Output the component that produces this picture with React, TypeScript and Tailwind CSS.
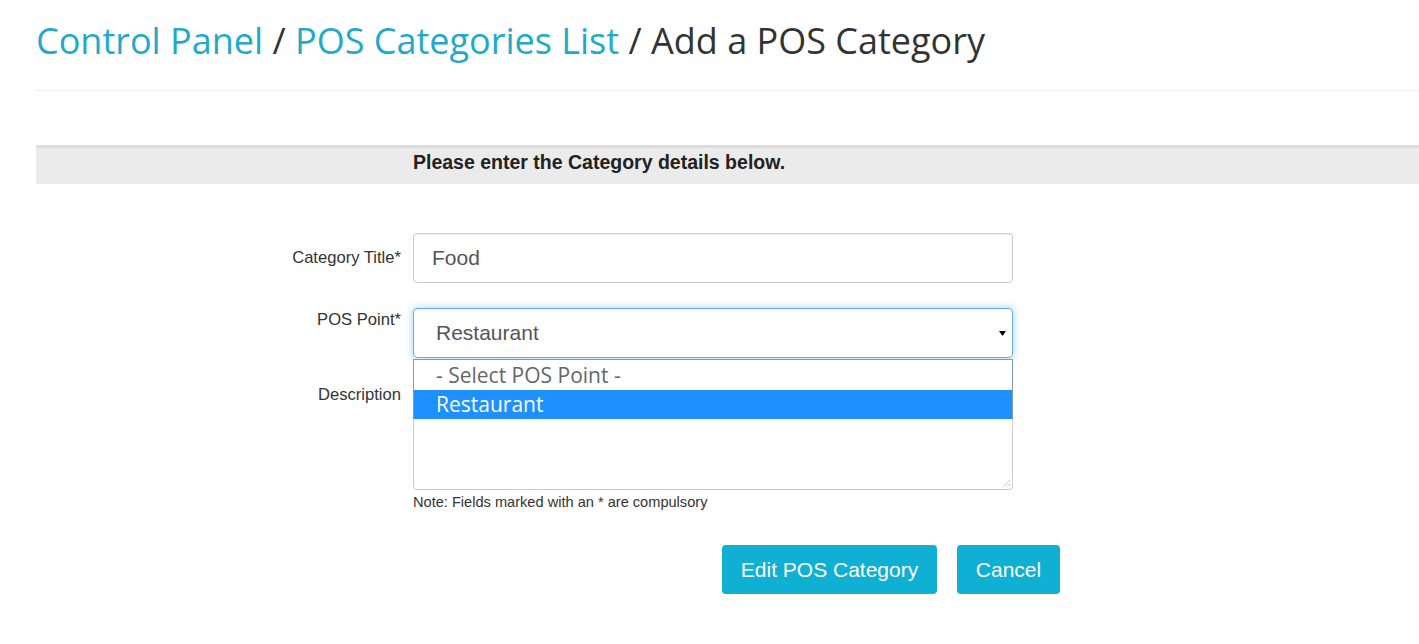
import React from "react";

export default function App() {
  return (
    <div className="w-[1419px] min-h-[644px] bg-white pl-[36px] overflow-hidden" style={{ fontFamily: '"Liberation Sans", Arial, sans-serif' }}>
      <h1
        className="mt-[21px] text-[36px] leading-[40px] text-[#333] whitespace-nowrap"
        style={{ fontFamily: '"Open Sans", sans-serif' }}
      >
        <span className="text-[#1fa9cb]">Control Panel</span> /{" "}
        <span className="text-[#1fa9cb]">POS Categories List</span> / Add a POS Category
      </h1>
      <div className="mt-[29px] border-t border-[#eeeeee]" />

      <div className="mt-[54px] border-t-[3px] border-[#dddddd] bg-[#ebebeb] h-[39px] flex">
        <div className="w-[377px] shrink-0" />
        <div className="pt-[3px] text-[19.5px] leading-[22px] font-bold text-[#222]">
          Please enter the Category details below.
        </div>
      </div>

      <div className="mt-[49px] flex flex-col">
        {/* Row 1 */}
        <div className="flex">
          <div className="w-[365px] shrink-0 text-right text-[16.6px] text-[#333] leading-[20px] pt-[15px]">
            Category Title*
          </div>
          <div className="ml-[12px] w-[600px] h-[50px] border border-[#cccccc] rounded-[4px] flex items-center pl-[18px] text-[21px] text-[#555] shadow-[inset_0_1px_1px_rgba(0,0,0,0.075)]">
            Food
          </div>
        </div>

        {/* Row 2 */}
        <div className="flex mt-[25px] relative z-10">
          <div className="w-[365px] shrink-0 text-right text-[16.6px] text-[#333] leading-[20px] pt-[2px]">
            POS Point*
          </div>
          <div className="ml-[12px] w-[600px] relative">
            <div className="h-[50px] border border-[#66afe9] rounded-[4px] flex items-center pl-[22px] pr-[6px] text-[21px] text-[#555] shadow-[inset_0_1px_1px_rgba(0,0,0,0.075),0_0_8px_rgba(102,175,233,0.6)]">
              <span className="flex-1">Restaurant</span>
              <svg width="7" height="5" viewBox="0 0 7 5">
                <polygon points="0,0 7,0 3.5,5" fill="#000" />
              </svg>
            </div>
            <div
              className="absolute left-0 top-[51px] w-[600px] bg-white border border-[#7f9db9] border-b-0 text-[21px]"
              style={{ fontFamily: '"Open Sans", sans-serif' }}
            >
              <div className="h-[30px] leading-[30px] pl-[22px] text-[#666]">- Select POS Point -</div>
              <div className="h-[29px] leading-[29px] pl-[22px] bg-[#1e90ff] text-white">Restaurant</div>
            </div>
          </div>
        </div>

        {/* Row 3 */}
        <div className="flex mt-[25px]">
          <div className="w-[365px] shrink-0 text-right text-[16.6px] text-[#333] leading-[20px] pt-[2px]">
            Description
          </div>
          <div className="ml-[12px] w-[600px]">
            <div className="relative h-[107px] border border-[#cccccc] rounded-[4px] shadow-[inset_0_1px_1px_rgba(0,0,0,0.075)]">
              <svg width="9" height="9" viewBox="0 0 9 9" className="absolute right-[1px] bottom-[1px]">
                <line x1="8" y1="1" x2="1" y2="8" stroke="#999" strokeWidth="1" strokeDasharray="1 1" />
                <line x1="8" y1="5" x2="5" y2="8" stroke="#999" strokeWidth="1" strokeDasharray="1 1" />
              </svg>
            </div>
            <div className="mt-[4px] text-[14.6px] leading-[16px] text-[#333]">
              Note: Fields marked with an * are compulsory
            </div>
          </div>
        </div>

        {/* Buttons */}
        <div className="flex mt-[35px] pl-[686px] gap-[20px]">
          <button className="h-[49px] w-[215px] rounded-[4px] bg-[#0fb0d3] text-white text-[21px]">
            Edit POS Category
          </button>
          <button className="h-[49px] w-[103px] rounded-[4px] bg-[#0fb0d3] text-white text-[21px]">
            Cancel
          </button>
        </div>
      </div>
    </div>
  );
}
